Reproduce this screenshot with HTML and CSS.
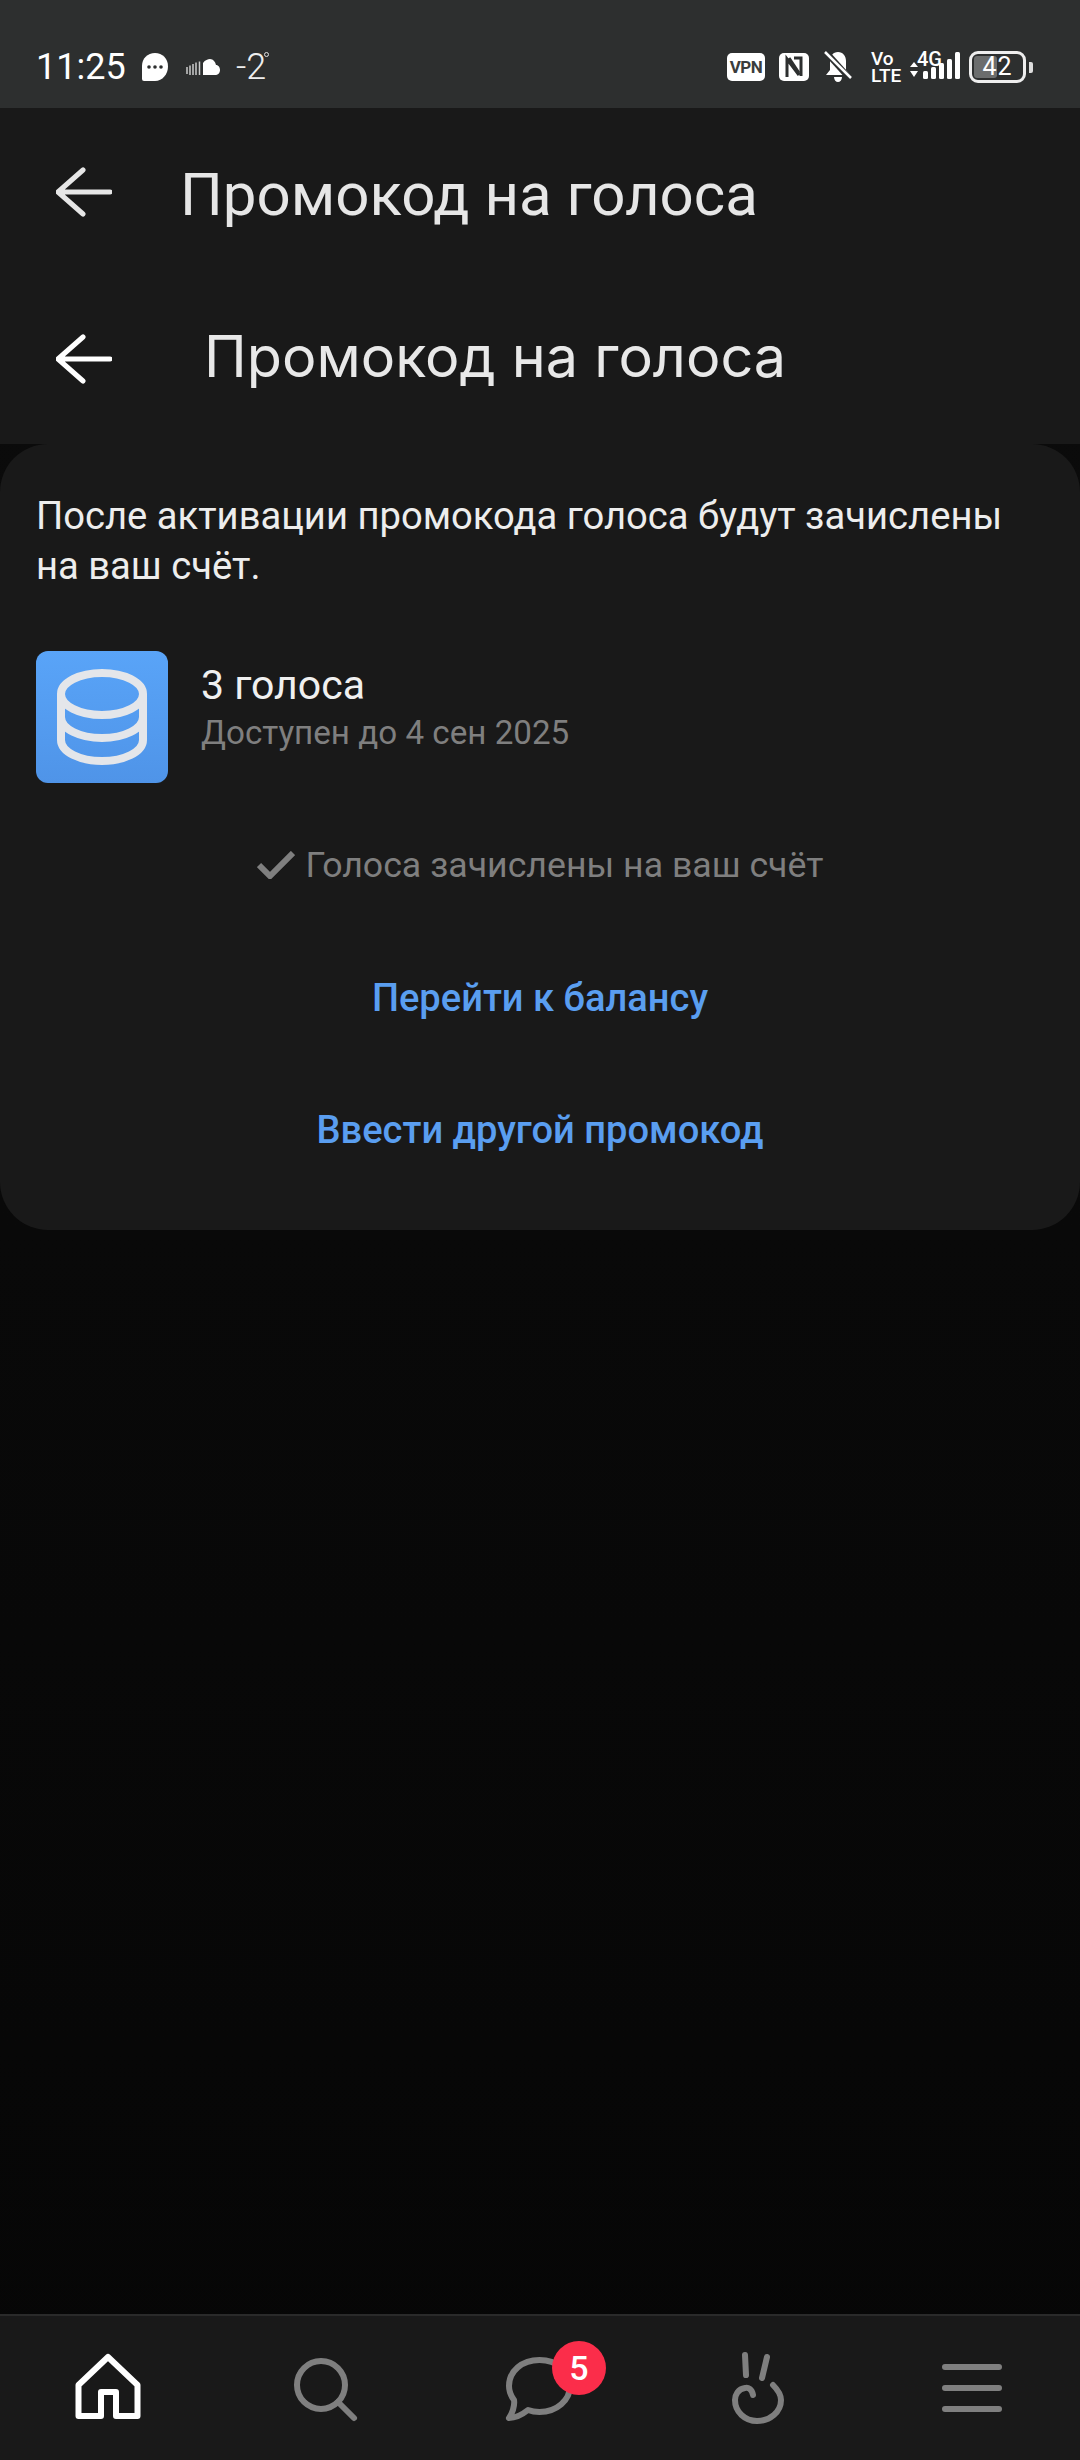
FILE: index.html
```html
<!DOCTYPE html>
<html lang="ru">
<head>
    <meta charset="UTF-8">
    <meta name="viewport" content="width=device-width, initial-scale=1.0">
    <title>Промокод на голоса</title>
    <link rel="stylesheet" href="styles.css">
</head>
<body>

    <!-- статус-бар -->
    <div class="status">
        <div class="status-left">
            <span class="time">11:25</span>
            <svg class="st-chat" width="26" height="28" viewBox="0 0 26 28"><path fill="#fff" d="M13 0C5.500 0 0 5.500 0 13V26Q0 28 2 28H13C20.500 28 26 21 26 13.500 26 5.500 20.500 0 13 0Z"/><circle cx="7" cy="14" r="1.800" fill="#2d2f2f"/><circle cx="13" cy="14" r="1.800" fill="#2d2f2f"/><circle cx="19" cy="14" r="1.800" fill="#2d2f2f"/></svg>
            <svg class="st-cloud" width="34" height="18" viewBox="0 0 34 18"><path fill="#fff" d="M17 17V5C19 2 22 1 24 1 27 1 29.500 4 30 7 32.500 7 34 9.500 34 12 34 15 32 17 29 17Z"/><path stroke="#fff" stroke-width="1.500" opacity=".75" d="M1 9V16M4 7.500V17M7 6V17M10 4.500V17M13.500 3.500V17"/></svg>
            <span class="temp">-2<i class="deg"></i></span>
        </div>
        <div class="status-right">
            <span class="vpn">VPN</span>
            <svg class="st-nfc" width="30" height="28" viewBox="0 0 30 28"><rect width="30" height="28" rx="5" fill="#fff"/><path fill="none" stroke="#2d2f2f" stroke-width="3" d="M8 24V6L20 22M15 5H22V23"/><path fill="none" stroke="#2d2f2f" stroke-width="3" d="M10 5 20 20"/></svg>
            <svg class="st-bell" width="28" height="32" viewBox="0 0 28 32"><path fill="#fff" d="M14 1C19 1 22 5 22 10V19L26 24H2L6 19V10C6 5 9 1 14 1ZM10 26H18C18 29 16 31 14 31S10 29 10 26Z"/><path stroke="#2d2f2f" stroke-width="6" d="M1 0 27 29"/><path stroke="#fff" stroke-width="2.500" d="M1 1 27 27"/></svg>
            <span class="volte">Vo<br>LTE</span>
            <div class="signal">
                <span class="net">4G</span>
                <svg width="50" height="30" viewBox="0 0 50 30"><path fill="#fff" d="M4 10 8 15H0ZM4 25 0 19H8Z"/><rect x="13" y="19" width="5" height="8" rx="1.500" fill="#fff"/><rect x="21" y="15" width="5" height="12" rx="1.500" fill="#fff"/><rect x="29" y="11" width="5" height="16" rx="1.500" fill="#fff"/><rect x="37" y="7" width="5" height="20" rx="1.500" fill="#fff"/><rect x="45" y="0" width="5" height="27" rx="1.500" fill="#fff"/></svg>
            </div>
            <div class="battery">
                <div class="battery-fill"></div>
                <span class="battery-num">42</span>
            </div>
            <div class="battery-nub"></div>
        </div>
    </div>

    <!-- шапка -->
    <div class="head">
        <div class="head-row head-first">
            <svg class="back" width="56" height="50" viewBox="0 0 56 50"><path fill="none" stroke="#e6e6e6" stroke-width="5" stroke-linecap="round" stroke-linejoin="round" d="M27 3 2 25 27 47M2 25H54"/></svg>
            <span class="head-title">Промокод на голоса</span>
        </div>
        <div class="head-row head-second">
            <svg class="back" width="56" height="50" viewBox="0 0 56 50"><path fill="none" stroke="#fff" stroke-width="5" stroke-linecap="round" stroke-linejoin="round" d="M27 3 2 25 27 47M2 25H54"/></svg>
            <span class="head-title title-alt">Промокод на голоса</span>
        </div>
    </div>

    <!-- карточка -->
    <div class="card">
        <p class="intro">После активации промокода голоса будут зачислены на ваш счёт.</p>
        <div class="item">
            <div class="item-icon">
                <svg width="92" height="96" viewBox="0 0 92 96"><g fill="none" stroke="#e4e6ea" stroke-width="8"><ellipse cx="46" cy="25" rx="41" ry="21"/><path d="M5 25V71C5 83 24 92 46 92S87 83 87 71V25M5 48C5 60 24 69 46 69S87 60 87 48"/></g></svg>
            </div>
            <div class="item-text">
                <div class="item-name">3 голоса</div>
                <div class="item-date">Доступен до 4 сен 2025</div>
            </div>
        </div>
        <div class="done">
            <svg width="38" height="28" viewBox="0 0 38 28"><path fill="none" stroke="#7f7f7f" stroke-width="6" d="M2 14 13 25 36 2"/></svg>
            <span>Голоса зачислены на ваш счёт</span>
        </div>
        <a class="link">Перейти к балансу</a>
        <a class="link">Ввести другой промокод</a>
    </div>

    <!-- нижнее меню -->
    <div class="tabs">
        <div class="tab">
            <svg width="72" height="72" viewBox="0 0 72 72"><path fill="none" stroke="#fff" stroke-width="6" stroke-linejoin="round" d="M36 5 65.500 33V64H44V40H29V64H6.500V33Z"/></svg>
        </div>
        <div class="tab">
            <svg width="72" height="72" viewBox="0 0 72 72"><g fill="none" stroke="#7f7f7f" stroke-width="6" stroke-linecap="round"><circle cx="33" cy="33" r="24"/><path d="M50 50 66 66"/></g></svg>
        </div>
        <div class="tab">
            <svg width="72" height="72" viewBox="0 0 72 72"><path fill="none" stroke="#7f7f7f" stroke-width="6" stroke-linejoin="round" d="M35.500 8C18 8 5 19 5 34 5 39 7 44 10 48 11 54 8 62 5 66 12 66 19 62 24 58 28 59.500 32 60 35.500 60 53 60 66 48 66 34 66 19 53 8 35.500 8Z"/></svg>
            <span class="badge">5</span>
        </div>
        <div class="tab">
            <svg width="72" height="72" viewBox="0 0 72 72"><g fill="none" stroke="#7f7f7f" stroke-width="6" stroke-linecap="round"><path d="M25 3 26 23M47 5 42 26"/><path d="M33 43C32 37 28 35 25 36 18 37 15 43 15 48 15 60 25 69 37 69 50 69 61 60 61 48 61 42 57 37 53 33"/></g></svg>
        </div>
        <div class="tab">
            <div class="burger"><i></i><i></i><i></i></div>
        </div>
    </div>

</body>
</html>
```

FILE: styles.css
```css
* { box-sizing: border-box; }
html, body { height: 100%; }
body { margin: 0; width: 1080px; height: 2460px; display: flex; flex-direction: column; background: linear-gradient(#0c0c0c, #060606); font-family: Roboto, "Noto Sans", sans-serif; color: #e8e8e8; overflow: hidden; }
p { margin: 0; }

/* status bar */
.status { height: 108px; flex: none; background: #2d2f2f; display: flex; justify-content: space-between; align-items: flex-start; padding: 52px 47px 0 36px; color: #fff; }
.status-left, .status-right { display: flex; align-items: center; height: 30px; }
.time { font-size: 36px; font-weight: 400; line-height: 30px; width: 89px; }
.st-chat { margin-left: 17px; }
.st-cloud { margin-left: 18px; }
.temp { position: relative; margin-left: 16px; font-size: 36px; font-weight: 300; line-height: 30px; color: #eee; }
.deg { position: absolute; top: 0; right: -3px; width: 5px; height: 5px; border: 1px solid #ddd; border-radius: 50%; }
.vpn { width: 38px; height: 28px; background: #fff; color: #3a3c3c; border-radius: 5px; font-size: 17px; font-weight: 700; line-height: 28px; text-align: center; letter-spacing: -.5px; }
.st-nfc { margin-left: 14px; }
.st-bell { margin-left: 15px; }
.volte { margin-left: 19px; font-size: 19px; font-weight: 500; line-height: 17px; width: 30px; }
.signal { position: relative; margin-left: 9px; width: 50px; height: 30px; }
.signal svg { display: block; position: absolute; bottom: 0; left: 0; }
.net { position: absolute; left: 7px; top: -3px; font-size: 20px; font-weight: 500; line-height: 20px; background: #2d2f2f; }
.battery { position: relative; margin-left: 9px; width: 57px; height: 32px; border: 3px solid #eee; border-radius: 9px; overflow: hidden; text-align: center; }
.battery-fill { position: absolute; left: 2px; top: 2px; bottom: 2px; width: 23px; background: #6b6d6d; border-radius: 3px; }
.battery-num { position: relative; font-size: 25px; font-weight: 400; line-height: 26px; display: block; letter-spacing: 1px; }
.battery-nub { width: 4px; height: 11px; margin-left: 3px; background: #ddd; border-radius: 0 2px 2px 0; }

/* header */
.head { flex: none; height: 336px; background: #191919; }
.head-row { display: flex; align-items: center; padding-left: 56px; }
.head-first { height: 172px; padding-top: 1px; }
.head-first .back { margin-bottom: 6px; }
.head-second { height: 156px; }
.head-second .back { margin-top: 2px; }
.head-title { margin-left: 68px; font-size: 60px; color: #e6e6e6; white-space: nowrap; }
.title-alt { margin-left: 92px; margin-bottom: 5px; font-family: Inter, Roboto, sans-serif; font-size: 57.5px; color: #e8e8e8; }
.back { flex: none; }

/* card */
.card { position: relative; height: 786px; flex: none; background: #191919; border-radius: 48px; padding: 0 36px; display: flex; flex-direction: column; }
.intro { margin-top: 47px; font-size: 38.2px; line-height: 50px; color: #ededed; }
.item { display: flex; margin-top: 60px; }
.item-icon { width: 132px; height: 132px; flex: none; background: linear-gradient(#59a4f8, #4f94e8); border-radius: 12px; display: flex; align-items: center; justify-content: center; }
.item-text { margin-left: 33px; padding-top: 12px; }
.item-name { font-size: 41px; line-height: 44px; color: #f0f0f0; }
.item-date { font-size: 33.2px; line-height: 44px; color: #7f7f7f; margin-top: 4px; }
.done { display: flex; align-items: center; justify-content: center; margin-top: 60px; height: 44px; color: #7f7f7f; font-size: 35.7px; }
.done span { margin-left: 11px; }
.link { display: block; text-align: center; margin-top: 88px; line-height: 44px; font-size: 38.1px; font-weight: 500; color: #5a9ef0; }
.done + .link { margin-top: 89px; }

/* bottom tabs */
.tabs { margin-top: auto; flex: none; height: 146px; background: #191919; border-top: 2px solid #2a2a2a; display: flex; }
.tab { position: relative; flex: 1; display: flex; align-items: center; justify-content: center; }
.badge { position: absolute; left: 120px; top: 25px; width: 54px; height: 54px; background: #fb2d4a; border-radius: 50%; color: #fff; font-size: 34px; font-weight: 500; line-height: 54px; text-align: center; }
.burger { width: 60px; display: flex; flex-direction: column; gap: 15px; }
.burger i { display: block; height: 6px; border-radius: 3px; background: #7f7f7f; }
```
